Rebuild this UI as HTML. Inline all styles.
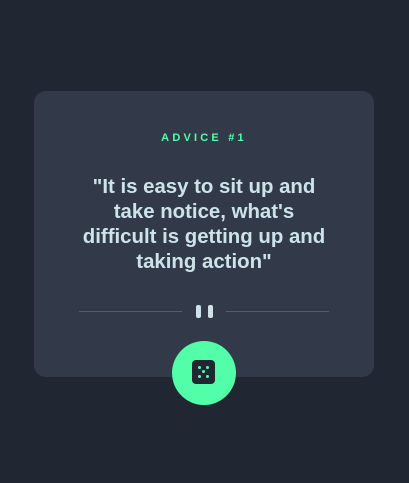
<!DOCTYPE html>
<html><head><meta charset="utf-8"><style>
html,body{margin:0;padding:0}
body{width:409px;height:483px;background:#202632;position:relative;overflow:hidden;font-family:"Liberation Sans",sans-serif}
.card{position:absolute;left:34px;top:91px;width:340px;height:286px;background:#323a49;border-radius:12px}
.t{position:absolute;left:0;right:0;top:41px;text-align:center;color:#52ffa8;font-size:11px;font-weight:bold;letter-spacing:3.2px}
.q{position:absolute;left:0;right:0;top:84px;text-align:center;color:#cee3e9;font-size:20.4px;font-weight:bold;line-height:25px;white-space:nowrap}
.l{position:absolute;top:220px;height:1px;background:#4f5d74}
.b{position:absolute;top:214px;width:5px;height:13px;background:#cee3e9;border-radius:2px}
.btn{position:absolute;left:172px;top:341px;width:64px;height:64px;border-radius:50%;background:#52ffa8}
.d{position:absolute;left:20px;top:19px;width:23px;height:24px;background:#202632;border-radius:4px}
.p{position:absolute;width:3px;height:3px;border-radius:50%;background:#52ffa8}
</style></head><body>
<div class="card">
<div class="t">ADVICE #1</div>
<div class="q">"It is easy to sit up and<br>take notice, what's<br>difficult is getting up and<br>taking action"</div>
<div class="l" style="left:45px;width:103px"></div>
<div class="l" style="left:192px;width:103px"></div>
<div class="b" style="left:162px"></div>
<div class="b" style="left:174px"></div>
</div>
<div class="btn"><div class="d">
<div class="p" style="left:6px;top:6px"></div>
<div class="p" style="left:14px;top:6px"></div>
<div class="p" style="left:10px;top:10px"></div>
<div class="p" style="left:6px;top:15px"></div>
<div class="p" style="left:14px;top:15px"></div>
</div></div>
</body></html>
